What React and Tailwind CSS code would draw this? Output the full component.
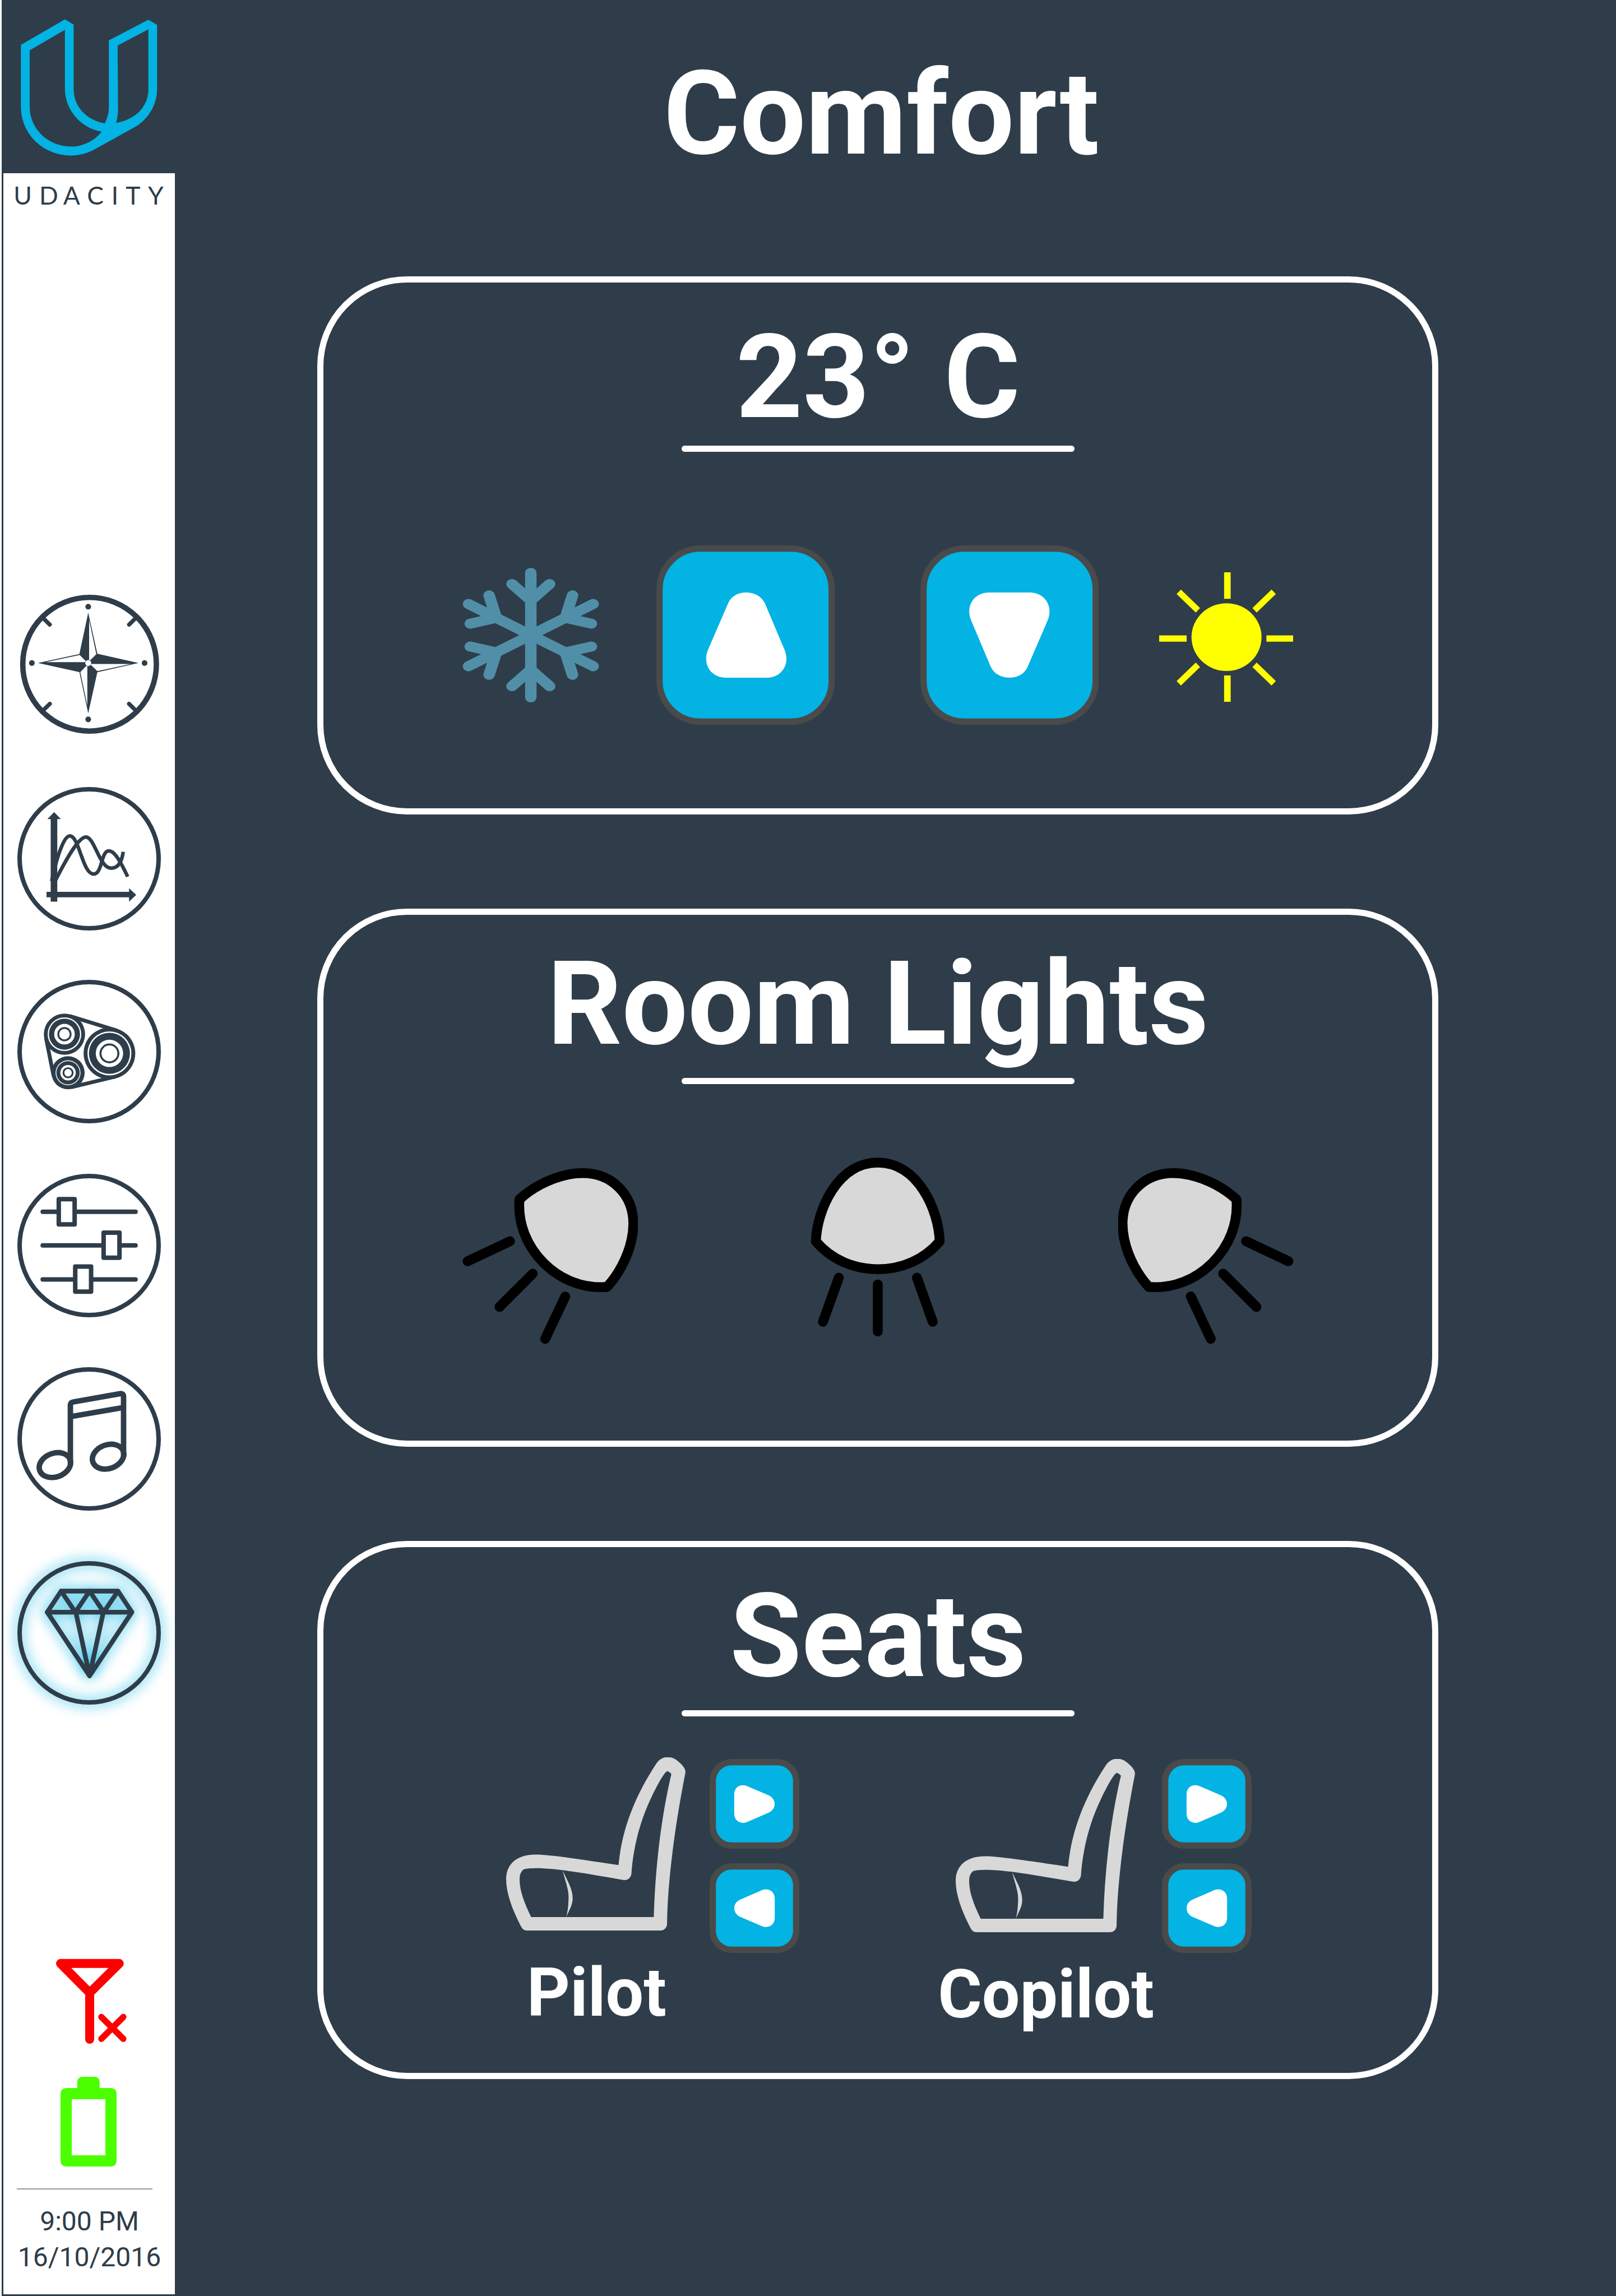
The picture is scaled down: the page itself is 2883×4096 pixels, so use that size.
const INK = '#2e3d49';

function Logo() {
  return (
    <svg viewBox="8 0 382 386" className="block h-[309px] w-[306px]">
      <path
        fill="#02b3e4"
        fillRule="evenodd"
        d="M47 100 L145 43 L164.5 54.5 V198 C164.5 240 195 268 234 275 C240 262 243 250 243 240 V90 L331 44 L350.5 55.5 V197 C350.5 235 330 265 303 282 L211 333 C195 342 178 346.5 158 346.5 C95 346.5 47 297 47 238 Z M66.5 112 L145 66.5 V197 C145 245 180 285 227 293.5 C213 311 197 319 180 324 C172 327 165 327 158 326.5 C105 326 66.5 285 66.5 238 Z M262.5 101.5 L331 65.5 V200 C331 235 305 266 259 274 C262 265 263.5 255 263.5 240 Z"
      />
    </svg>
  );
}

function Wordmark() {
  return (
    <svg viewBox="8 386 382 90" className="block h-[72px] w-[306px] font-['Lato',sans-serif]">
      <text x="51 109 160 213 256.5 297 347.5" y="455.7" fontSize="55.6" textAnchor="middle" fill={INK}>
        UDACITY
      </text>
    </svg>
  );
}

function NavIcon({ children, className = '' }) {
  return (
    <svg
      viewBox="0 0 320 320"
      className={`block h-[256px] w-[256px] shrink-0 overflow-visible ${className}`}
      fill="none"
      stroke={INK}
    >
      {children}
    </svg>
  );
}

const Ring = () => <circle cx="160" cy="160" r="155" strokeWidth="10" />;

function Compass() {
  return (
    <NavIcon>
      <circle cx="161" cy="160" r="149" strokeWidth="12" />
      <g transform="translate(-39 -21.7) scale(.33333)">
        <g fill={INK} stroke="none">
          <path d="M591 200 L652 475 L927 537 L652 599 L591 873 L532 598 L255 537 L532 477 Z" />
          <circle cx="591" cy="160" r="19" />
          <circle cx="214" cy="537" r="19" />
          <circle cx="968" cy="537" r="19" />
          <circle cx="591" cy="914" r="19" />
        </g>
        <g fill="#fff" stroke="none">
          <path d="M597 250 V518 H605 L645 478 Z" />
          <path d="M612 543 H875 L652 591 L608 549 Z" />
          <path d="M585 820 V556 H578 L538 598 Z" />
          <path d="M308 531 H572 V522 L534 483 Z" />
          <circle cx="591" cy="537" r="20" />
        </g>
        <path strokeWidth="27" strokeLinecap="round" d="M290 237 L334 280 M908 237 L864 280 M290 853 L334 810 M908 853 L864 810" />
      </g>
    </NavIcon>
  );
}

function Graph() {
  return (
    <NavIcon className="mt-[90.3px]">
      <Ring />
      <path fill={INK} stroke="none" d="M82 56 L97 71.5 H89 V255.5 H74.3 V71.5 H67 Z" />
      <path fill={INK} stroke="none" d="M65 233.6 H249 V225.7 L265 240.6 L249 255.5 V246 H65 Z" />
      <path strokeWidth="8" d="M76.500 210 C87 160 103 109 117 109 C138 109 145 194 170 194 C190 194 186 142.500 204 142.500 C216 142.500 228 162 246 200" />
      <path strokeWidth="8" d="M79 220 C105 168 135 111.500 153 111.500 C172 111.500 183 181 209 181 C226 181 233 166 236 144.500" />
    </NavIcon>
  );
}

const WHEELS = [
  { x: 105, y: 121.2, r: [46, 37.5, 34.7, 23, 15.8, 11.7] },
  { x: 113, y: 207.2, r: [37, 27.8, 26, 17.2, 12.3, 8.3] },
  { x: 205.3, y: 164, r: [57.6, 49, 45.8, 30.5, 22.2, 17.7] },
];

function Belt() {
  return (
    <NavIcon className="mt-[88.3px]">
      <Ring />
      <path strokeWidth="8.5" d="M117.300 81 L221 112.900 M217.800 216 L120.700 239.300 M80.600 213.700 L63.800 129.400" />
      {WHEELS.map((w) =>
        w.r.map((r, i) => (
          <circle key={`${w.x}-${r}`} cx={w.x} cy={w.y} r={r} stroke="none" fill={i % 2 ? '#fff' : INK} />
        ))
      )}
    </NavIcon>
  );
}

function Sliders() {
  return (
    <NavIcon className="mt-[89.6px]">
      <Ring />
      <g strokeWidth="10" strokeLinecap="round" strokeLinejoin="round">
        <path d="M56.500 84.700 H263.500 M56.500 159.600 H263.500 M56.500 235.500 H263.500" />
        <g fill="#fff">
          <rect x="92.3" y="56.7" width="35.4" height="56" />
          <rect x="192.3" y="131.3" width="35.4" height="56" />
          <rect x="129" y="206.9" width="35.4" height="56" />
        </g>
      </g>
    </NavIcon>
  );
}

function Music() {
  return (
    <NavIcon className="mt-[89.6px]">
      <Ring />
      <g strokeWidth="12.2">
        <path d="M118.200 216 V84 Q118.200 78.500 125 77.500 L230 59 Q236.800 58.500 236.800 66 V197" />
        <path d="M120 110 L236 90" />
        <ellipse cx="83.700" cy="218.300" rx="36" ry="26.500" transform="rotate(-20 83.700 218.300)" />
        <ellipse cx="202.300" cy="199.600" rx="36" ry="26.500" transform="rotate(-20 202.300 199.600)" />
      </g>
    </NavIcon>
  );
}

function Diamond() {
  return (
    <NavIcon className="mt-[89.6px] drop-shadow-[0_0_12px_#02b3e4]">
      <Ring />
      <g transform="translate(-39 -40.8) scale(.33333)" strokeWidth="31" strokeLinejoin="round" strokeLinecap="round">
        <path d="M410 323 H790 L883 464 L600 890 L317 464 Z" />
        <path d="M317 464 H883" />
        <path d="M410 323 L505 464 L600 323 L695 464 L790 323" />
        <path d="M508 464 L600 890 L692 464" />
      </g>
    </NavIcon>
  );
}

function NoSignal() {
  return (
    <svg
      viewBox="125 4368 158 190"
      className="ml-[93.6px] block h-[152px] w-[126.4px]"
      fill="none"
      stroke="#ff0000"
      strokeLinecap="round"
      strokeLinejoin="round"
    >
      <path strokeWidth="20" d="M135 4379 H266 L200 4444.500 Z M200 4444.500 V4548" />
      <path strokeWidth="14" d="M226 4498.200 L275 4547 M275 4498.200 L226 4547" />
    </svg>
  );
}

function Battery() {
  return (
    <svg viewBox="136 4632 125 200" className="ml-[102.4px] mt-[59px] block h-[160px] w-[100px]">
      <path fill="#4cff00" d="M173.300 4660 V4644 Q173.300 4632 186 4632 H211 Q223.300 4632 223.300 4644 V4660 Z" />
      <path
        fill="#4cff00"
        fillRule="evenodd"
        d="M150 4657 H247 Q261 4657 261 4671 V4818 Q261 4832 247 4832 H150 Q136 4832 136 4818 V4671 Q136 4657 150 4657 Z M161 4682 V4807 H236 V4682 Z"
      />
    </svg>
  );
}

function Sidebar() {
  return (
    <aside className="flex h-[4096px] w-[312px] shrink-0 border-l-[3px] border-white">
      <div className="ml-[3px] flex w-[306px] flex-col">
        <Logo />
        <div className="flex h-[3784px] flex-col bg-white">
          <Wordmark />
          <nav className="mt-[676.4px] flex flex-col pl-[24.8px]">
            <Compass />
            <Graph />
            <Belt />
            <Sliders />
            <Music />
            <Diamond />
          </nav>
          <div className="mt-[453.6px]">
            <NoSignal />
            <Battery />
            <div className="ml-[24px] mt-[38.6px] h-[2px] w-[242px] bg-[#979797]" />
            <p className="mt-[25px] w-[307px] text-center font-['Roboto',sans-serif] text-[48px] leading-[64px] text-[#2e3d49]">
              9:00 PM
              <br />
              16/10/2016
            </p>
          </div>
        </div>
      </div>
    </aside>
  );
}

function Card({ title, titleClass = '', children }) {
  return (
    <section className="flex h-[960px] w-[2000px] flex-col items-center rounded-[160px] border-[11px] border-white pt-[49px]">
      <h2 className={`text-[208px] font-bold leading-[240px] ${titleClass}`}>{title}</h2>
      <div className="mt-[2.4px] h-[11px] w-[701px] shrink-0 rounded-full bg-white" />
      {children}
    </section>
  );
}

function Snowflake() {
  return (
    <svg viewBox="0 0 300 300" className="mt-[40px] block h-[240px] w-[240px] overflow-visible" fill="none" stroke="#518fa8">
      <g transform="translate(150 150) scale(1.155 1)" strokeWidth="22.2" strokeLinecap="round">
        {[0, 60, 120, 180, 240, 300].map((a) => (
          <path key={a} transform={`rotate(${a})`} d="M0 0 V-138.900 M-36.400 -114 L0 -77 L36.400 -114" />
        ))}
      </g>
    </svg>
  );
}

function Sun() {
  return (
    <svg
      viewBox="947 288 470 867"
      preserveAspectRatio="none"
      className="ml-[107.3px] mt-[48px] block h-[231.2px] w-[239.8px]"
      fill="#ffff00"
    >
      <ellipse cx="1182.5" cy="721.5" rx="122.500" ry="226.500" />
      <path d="M1174 288 H1197 V465 H1174 Z M1174 978 H1197 V1155 H1174 Z M947 709.500 H1043 V752.500 H947 Z M1322 709.500 H1417 V752.500 H1322 Z" />
      <path d="M1023 403 L1090 527 L1075 557 L1008 433 Z M1340 403 L1355 433 L1288 557 L1273 527 Z M1075 892 L1090 922 L1023 1046 L1008 1016 Z M1288 892 L1355 1016 L1340 1046 L1273 922 Z" />
    </svg>
  );
}

function BigButton({ down, className }) {
  return (
    <button className={`block h-[320px] w-[318.4px] shrink-0 ${className}`}>
      <svg viewBox="0 0 398 400" className="block h-full w-full">
        <rect x="7" y="7" width="384" height="386" rx="91" fill="#02b3e4" stroke="#4a4a4a" strokeWidth="14" />
        <path
          fill="#fff"
          transform={down ? 'rotate(180 199.5 200)' : undefined}
          d="M199.500 105 C180 105 166 115 160 129 L115 233 C102 265 122 295 155 295 H246 C279 295 299 265 286 233 L242 129 C235 114 219 105 199.500 105 Z"
        />
      </svg>
    </button>
  );
}

function SmallButton({ back, className = '' }) {
  return (
    <button className={`block h-[160px] w-[160px] ${className}`}>
      <svg viewBox="0 0 200 200" className="block h-full w-full">
        <rect x="7" y="7" width="186" height="186" rx="42" fill="#02b3e4" stroke="#4a4a4a" strokeWidth="14" />
        <path
          fill="#fff"
          transform={back ? 'rotate(180 100 100.3)' : undefined}
          d="M54.800 79 C54.800 66 63 58.500 74.600 58.500 C79 58.500 83 60 87 62 L133 81.500 C141 86 145 93 145 100.400 C145 108 141 115 133 119 L87 139 C83 141 79 142.400 74.600 142.400 C63 142.400 54.800 134 54.800 122 Z"
        />
      </svg>
    </button>
  );
}

function LampShape() {
  return (
    <g stroke="#000" strokeWidth="22" strokeLinecap="round" strokeLinejoin="round">
      <path
        fill="#d8d8d8"
        d="M1820 2769 C1822 2700 1868 2593.300 1958 2593.300 C2048 2593.300 2094 2700 2096 2769 C2061 2810 2011 2831 1958 2831 C1905 2831 1855 2810 1820 2769 Z"
      />
      <path d="M1871 2850 L1835.700 2948.300 M1958 2865 V2970 M2045.300 2850 L2080.500 2948.300" />
    </g>
  );
}

function Lights() {
  return (
    <div className="mt-[130.4px] flex w-[1484.8px] justify-between">
      <svg viewBox="1030 2582 392 418" className="block h-[334.4px] w-[313.6px]">
        <g transform="translate(-702 4) rotate(45 1958 2769)">
          <LampShape />
        </g>
      </svg>
      <svg viewBox="1808 2582 300 418" className="block h-[334.4px] w-[240px]">
        <LampShape />
      </svg>
      <svg viewBox="2494 2582 392 418" className="block h-[334.4px] w-[313.6px]">
        <g transform="translate(702 4) rotate(-45 1958 2769)">
          <LampShape />
        </g>
      </svg>
    </div>
  );
}

function Seat({ label, seatClass, buttonClass }) {
  return (
    <div className="flex">
      <div className={`flex w-[320px] flex-col items-center ${seatClass}`}>
        <svg viewBox="99 134 825 866" preserveAspectRatio="none" className="block h-[309.3px] w-[320px]" fill="#d8d8d8">
          <path
            fillRule="evenodd"
            d="M168 980 C125 890 99 810 99 742 C99 680 135 620 235 620 C300 620 450 645 616 672 C630 500 690 330 786 172 C810 125 855 122 888 152 C910 172 927 192 923 213 C880 450 841 740 839 970 C836 988 826 999 808 999 H194 C182 998 175 993 168 980 Z M214 932 H778 C784 690 812 430 859 217 C852 208 846 204 839 203 C825 210 790 280 768 332 C710 460 682 600 675 717 C672 735 660 748 641 747 C500 722 330 686 230 688 C200 689 180 691 175 698 C165 710 161 722 161 745 C161 800 182 860 214 932 Z"
          />
          <path d="M359 700 C378 745 405 790 405 838 C405 870 390 895 379 923 L375 934 C380 915 386 880 386 830 C386 790 370 750 359 700 Z" />
        </svg>
        <p className="mt-[40px] w-max pl-[3px] text-[120px] font-bold leading-[142px]">{label}</p>
      </div>
      <div className={`mt-[3px] flex flex-col ${buttonClass}`}>
        <SmallButton />
        <SmallButton back className="mt-[25.7px]" />
      </div>
    </div>
  );
}

export default function App() {
  return (
    <div className="flex h-[4096px] w-[2883px] overflow-hidden bg-[#2e3d49] font-['Roboto',sans-serif] text-white">
      <Sidebar />
      <main className="flex w-[2508.8px] shrink-0 flex-col items-center">
        <h1 className="ml-[12px] mt-[83px] text-[208px] font-bold leading-[240px]">Comfort</h1>
        <div className="mt-[169.8px] flex flex-col gap-[168px]">
          <Card title="23° C">
            <div className="mt-[166.4px] flex self-start pl-[250px]">
              <Snowflake />
              <BigButton className="ml-[104px]" />
              <BigButton down className="ml-[152.2px]" />
              <Sun />
            </div>
          </Card>
          <Card title="Room Lights" titleClass="-mt-[10px] mb-[10px]">
            <Lights />
          </Card>
          <Card title="Seats" titleClass="-mt-[10px] mb-[10px]">
            <div className="mt-[73px] flex self-start pl-[325.4px]">
              <Seat label="Pilot" seatClass="" buttonClass="ml-[43.4px]" />
              <div className="ml-[278.400px]">
                <Seat label="Copilot" seatClass="mt-[3px]" buttonClass="ml-[48.200px]" />
              </div>
            </div>
          </Card>
        </div>
      </main>
    </div>
  );
}
